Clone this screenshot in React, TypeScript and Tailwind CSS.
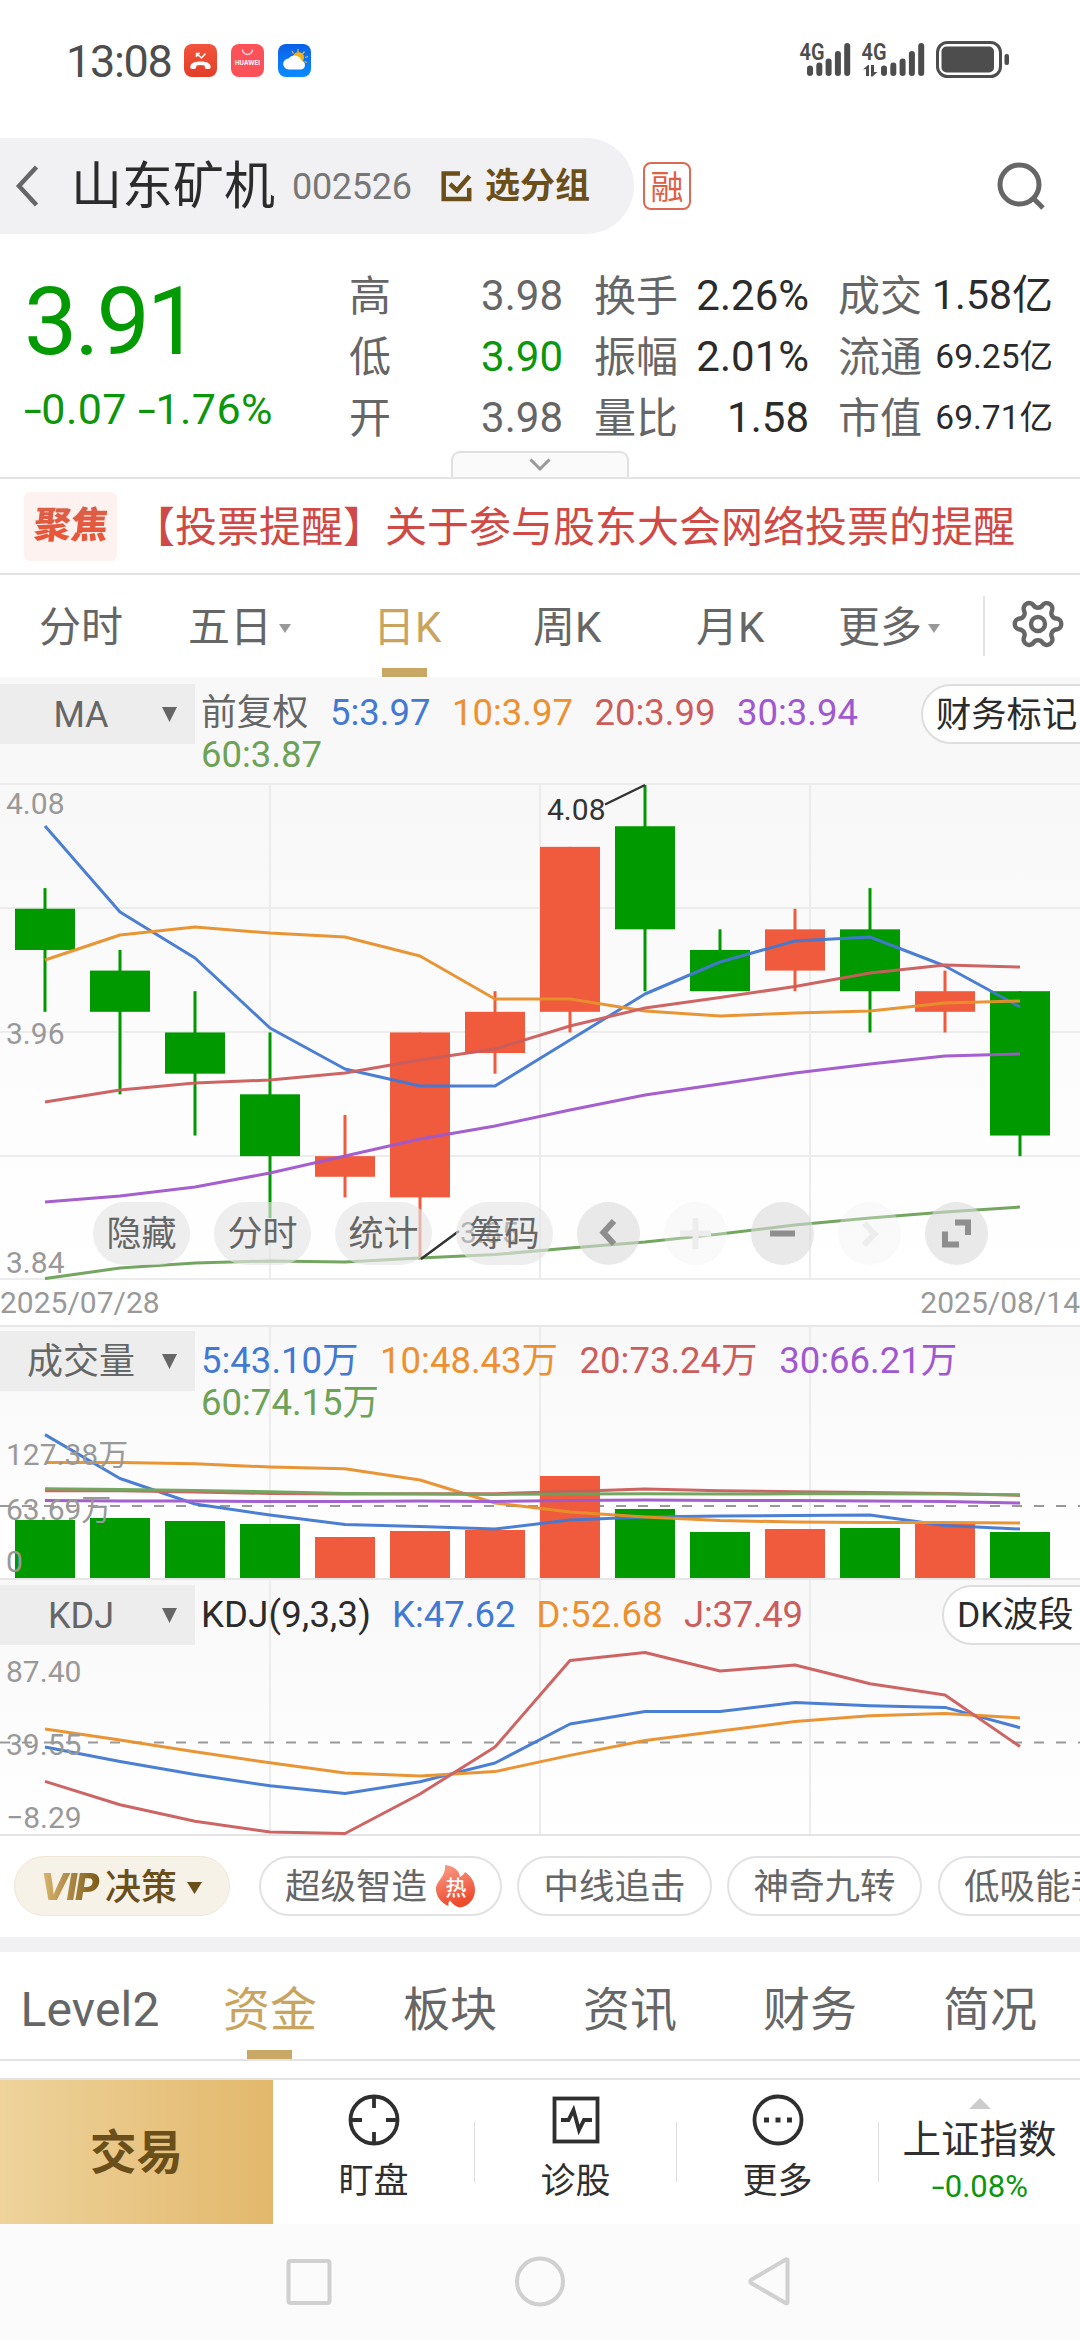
import type { ReactNode } from "react";
import { Settings } from "lucide-react";

type Candle = { open: number; close: number; high: number; low: number };

interface Series {
  color: string;
  ys: number[];
}

const UP = "#ef5b3c";
const DOWN = "#009900";
const BLUE = "#4279d2";
const ORANGE = "#e8902c";
const RED = "#cb5d5c";
const PURPLE = "#a058cc";
const GREEN = "#6da259";

const candles: Candle[] = [
  { open: 4.02, close: 4.0, high: 4.03, low: 3.97 },
  { open: 3.99, close: 3.97, high: 4.0, low: 3.93 },
  { open: 3.96, close: 3.94, high: 3.98, low: 3.91 },
  { open: 3.93, close: 3.9, high: 3.96, low: 3.87 },
  { open: 3.89, close: 3.9, high: 3.92, low: 3.88 },
  { open: 3.88, close: 3.96, high: 3.96, low: 3.85 },
  { open: 3.95, close: 3.97, high: 3.98, low: 3.94 },
  { open: 3.97, close: 4.05, high: 4.05, low: 3.96 },
  { open: 4.06, close: 4.01, high: 4.08, low: 3.98 },
  { open: 4.0, close: 3.98, high: 4.01, low: 3.98 },
  { open: 3.99, close: 4.01, high: 4.02, low: 3.98 },
  { open: 4.01, close: 3.98, high: 4.03, low: 3.96 },
  { open: 3.97, close: 3.98, high: 3.99, low: 3.96 },
  { open: 3.98, close: 3.91, high: 3.98, low: 3.9 },
];

const priceLines: Series[] = [
  { color: BLUE, ys: [827, 913, 959, 1029, 1070, 1087, 1087, 1041, 995, 963, 942, 938, 967, 1008] },
  { color: ORANGE, ys: [961, 936, 928, 934, 938, 957, 1000, 1000, 1012, 1017, 1014, 1012, 1004, 1002] },
  { color: RED, ys: [1103, 1091, 1084, 1081, 1074, 1061, 1050, 1027, 1009, 998.6, 987.5, 974, 966, 968] },
  { color: PURPLE, ys: [1203, 1197, 1188, 1174, 1157, 1140, 1127, 1111, 1096, 1085, 1074, 1065, 1057, 1055] },
  { color: GREEN, ys: [1279.6, 1269, 1264, 1262, 1263, 1259, 1255.5, 1249, 1243, 1235, 1226, 1219, 1213, 1208] },
];

const volumeTops = [1521, 1519, 1522, 1525, 1538, 1532, 1531, 1477, 1510, 1533, 1530, 1529, 1525, 1533];

const volumeLines: Series[] = [
  { color: BLUE, ys: [1435.6, 1479.5, 1505, 1516, 1525.5, 1527.5, 1530, 1521, 1518, 1517, 1516.5, 1516, 1526.5, 1530] },
  { color: ORANGE, ys: [1463.6, 1463.6, 1464.7, 1468, 1469.7, 1481, 1504, 1513, 1518, 1521.5, 1523, 1523.5, 1523.5, 1524] },
  { color: RED, ys: [1491.7, 1491.7, 1493, 1494.4, 1495, 1494.7, 1494.7, 1492.4, 1490, 1491.7, 1492.7, 1493.4, 1494.4, 1496.4] },
  { color: PURPLE, ys: [1501.5, 1502, 1502, 1502.5, 1502.5, 1502, 1502.5, 1501.5, 1501, 1501.5, 1501.5, 1502, 1502.5, 1504] },
  { color: GREEN, ys: [1489.7, 1490.4, 1491.4, 1492.7, 1494.4, 1495, 1495.4, 1495, 1494.8, 1495, 1494.8, 1494.8, 1495, 1495.7] },
];

const kdjLines: Series[] = [
  { color: BLUE, ys: [1748, 1762.5, 1775.6, 1786.8, 1794.6, 1782.7, 1764, 1725, 1712.4, 1712.4, 1703.6, 1706.7, 1708.4, 1728.7] },
  { color: ORANGE, ys: [1730, 1741, 1752.7, 1763.8, 1774, 1777, 1772.6, 1756.4, 1741.5, 1732, 1722.6, 1716.8, 1714.5, 1718.9] },
  { color: RED, ys: [1782.4, 1805.7, 1822.3, 1833, 1834.5, 1795, 1748, 1661.4, 1653.5, 1672, 1666, 1684.7, 1695.9, 1747.6] },
];

const stats = [
  [
    { label: "高", value: "3.98", tone: "text-[#666]" },
    { label: "低", value: "3.90", tone: "text-[#0b960b]" },
    { label: "开", value: "3.98", tone: "text-[#666]" },
  ],
  [
    { label: "换手", value: "2.26%", tone: "text-[#2b2b2b]" },
    { label: "振幅", value: "2.01%", tone: "text-[#2b2b2b]" },
    { label: "量比", value: "1.58", tone: "text-[#2b2b2b]" },
  ],
  [
    { label: "成交", value: "1.58亿", tone: "text-[#2b2b2b] text-[41px]" },
    { label: "流通", value: "69.25亿", tone: "text-[#2b2b2b] text-[33.5px]" },
    { label: "市值", value: "69.71亿", tone: "text-[#2b2b2b] text-[33.5px]" },
  ],
];
const statCols = ["w-[214px] ml-[349px]", "w-[215px] ml-[31px]", "w-[215px] ml-[29px]"];

const cx = (i: number) => 45 + i * 75;
const priceY = (p: number) => 786 + (4.08 - p) * 2062;

function Lines({ series }: { series: Series[] }) {
  return (
    <g fill="none" strokeWidth={3} strokeLinejoin="round" opacity={0.95}>
      {series.map((s, n) => (
        <polyline key={n} stroke={s.color} points={s.ys.map((y, i) => `${cx(i)},${y}`).join(" ")} />
      ))}
    </g>
  );
}

function GridCols({ top, bottom }: { top: number; bottom: number }) {
  return (
    <g stroke="#ececec" strokeWidth={2}>
      {[270, 540, 810].map((x) => (
        <line key={x} x1={x} x2={x} y1={top} y2={bottom} />
      ))}
    </g>
  );
}

function Down({ className = "" }: { className?: string }) {
  return (
    <svg viewBox="0 0 16 16" preserveAspectRatio="none" className={className}>
      <path d="M0 0h16L8 16z" fill="currentColor" />
    </svg>
  );
}

function Minus() {
  return <span className="inline-block scale-x-150 mx-[2.5px]">-</span>;
}

function Selector({ children }: { children: ReactNode }) {
  return (
    <div className="flex h-[60px] w-[195px] shrink-0 items-center bg-[#ededed] text-[#666]">
      <span className="w-[162px] pt-px text-center text-[36px]">{children}</span>
      <Down className="h-[15px] w-[15px]" />
    </div>
  );
}

function StatusBar() {
  return (
    <div className="flex h-[138px] items-start px-[66px] pt-[43px] text-[#4d4d4d]">
      <span className="w-[118px] text-[45px] leading-[38px] tracking-[-1.3px]">13:08</span>
      <svg viewBox="0 0 128 34" className="mt-px h-[34px] w-[128px]">
        <defs>
          <linearGradient id="phone" x1="0" y1="0" x2="0" y2="1">
            <stop offset="0" stopColor="#f2543c" />
            <stop offset="1" stopColor="#e23e28" />
          </linearGradient>
          <linearGradient id="sky" x1="0" y1="0" x2="0" y2="1">
            <stop offset="0" stopColor="#0a5fe8" />
            <stop offset="1" stopColor="#0a8cff" />
          </linearGradient>
        </defs>
        <rect width="33" height="33" rx="8" fill="url(#phone)" />
        <path d="M6.500 24c-1-4.500 3.500-6.500 10-6.500s11 2 10 6.500c-.3 1.500-5 1.200-5.500 0l-.5-2.500c-2.500-.8-5.500-.8-8 0L12 24c-.5 1.200-5.200 1.500-5.500 0z" fill="#fff" />
        <path d="M12.500 13V9.500H16M13 10l4.500 4 4-4.500" fill="none" stroke="#fff" strokeWidth="1.500" />
        <rect x="47" width="33" height="33" rx="8" fill="#fb5259" />
        <path d="M58.500 5.500a5 5 0 0 0 10 0" fill="none" stroke="#ffd9da" strokeWidth="1.300" />
        <text x="63.500" y="21" textAnchor="middle" fill="#fff" fontSize="6" fontWeight="700" textLength="25" fontFamily="Inter, sans-serif">HUAWEI</text>
        <rect x="94" width="33" height="33" rx="8" fill="url(#sky)" />
        <g stroke="#e5b93f" strokeWidth="1.300">
          <path d="M114 5v3M108 7l1.500 2.500M120.500 7.500l-2 2.500M124 12.500l-3 1M123 18.500l-2.500-1" />
        </g>
        <circle cx="114.500" cy="13.500" r="5.500" fill="#f5b21a" />
        <path d="M105 25.500a5.500 5.500 0 0 1-.5-11 7.500 7.500 0 0 1 13 2 4.600 4.600 0 0 1-.5 9z" fill="#fdfdfd" />
      </svg>
      <svg viewBox="798 38 214 42" className="-mt-[5px] ml-auto mr-[2px] h-[42px] w-[214px]" fill="#4d4d4d">
        <g fontFamily="Roboto, sans-serif" fontSize="23" fontWeight="600">
          <text x="799.500" y="59.500" textLength="25" lengthAdjust="spacingAndGlyphs">4G</text>
          <text x="861.500" y="59.500" textLength="25" lengthAdjust="spacingAndGlyphs">4G</text>
        </g>
        {[65.5, 62.5, 58.5, 51, 43].map((y, i) => (
          <g key={i}>
            <rect x={807 + i * 9.3} y={y} width="6" height={76 - y} rx="3" />
            <rect x={881 + i * 9.3} y={y} width="6" height={76 - y} rx="3" />
          </g>
        ))}
        <path d="M863 69.500l5-4.500h1v11h-3v-7zM871 65h3v7h3.500l-5 4.500H871z" />
        <rect x="937.500" y="42.500" width="63" height="34" rx="10" fill="none" stroke="#4d4d4d" strokeWidth="3" />
        <rect x="941.500" y="46.500" width="52.500" height="26" rx="5" />
        <rect x="1004.500" y="54" width="4.500" height="11" rx="2" />
      </svg>
    </div>
  );
}

function Header() {
  return (
    <div className="flex h-[96px] items-center">
      <div className="flex h-[96px] w-[634px] items-center rounded-r-[48px] bg-[#f1f1f4]">
        <svg viewBox="0 0 24 42" className="ml-[15px] h-[42px] w-[24px]" fill="none" stroke="#666" strokeWidth="4.500">
          <path d="M21.500 2L4 21l17.500 19" />
        </svg>
        <span className="ml-[32px] w-[205px] pt-[3px] whitespace-nowrap text-[51px] text-[#2b2b2b]">山东矿机</span>
        <span className="ml-[16px] w-[120px] pt-px text-[36px] tracking-[-0.3px] text-[#777]">002526</span>
        <svg viewBox="0 0 32 32" className="ml-[29px] h-[32px] w-[32px]" fill="none" stroke="#6b4f1a" strokeWidth="4.500">
          <path d="M19 3.500H2.700v25.500h25.500V18" />
          <path d="M9 14l7 6.500L28.500 6" />
        </svg>
        <span className="ml-[12px] pt-[2px] text-[35px] font-bold text-[#6b4f1a]">选分组</span>
      </div>
      <div className="ml-[9px] flex h-[48px] w-[48px] items-center justify-center rounded-[8px] border-[2.5px] border-[#dc6a52] pt-[2px] text-[33px] leading-none text-[#df5f45]">
        融
      </div>
      <svg viewBox="0 0 50 50" className="ml-[305px] h-[50px] w-[50px]" fill="none" stroke="#666" strokeWidth="5">
        <circle cx="23.500" cy="23.500" r="19.500" />
        <path d="M37 37l10 10" />
      </svg>
    </div>
  );
}

function Quote() {
  return (
    <div className="relative h-[245px] border-b-2 border-[#e3e3e3]">
      <div className="absolute left-[24px] top-[36px] text-[#049a04]">
        <div className="h-[104px] text-[95px] leading-[104px] tracking-[-3px]">3.91</div>
        <div className="mt-[9px] text-[43px] leading-[52px] tracking-[0.45px] whitespace-nowrap text-[#0b960b]">
          <Minus />0.07 <Minus />1.76%
        </div>
      </div>
      <div className="flex pt-[31px]">
        {stats.map((col, c) => (
          <div key={c} className={statCols[c]}>
            {col.map((s) => (
              <div key={s.label} className="flex h-[61px] items-center justify-between text-[42px] leading-[61px] whitespace-nowrap">
                <span className="pt-px text-[#666]">{s.label}</span>
                <span className={s.tone}>{s.value}</span>
              </div>
            ))}
          </div>
        ))}
      </div>
      <div className="absolute bottom-0 left-[451px] flex h-[26px] w-[178px] items-center justify-center rounded-t-[9px] border-2 border-b-0 border-[#e0e0e0] bg-[#fafafa]">
        <svg viewBox="0 0 22 14" className="h-[14px] w-[22px]" fill="none" stroke="#999" strokeWidth="3">
          <path d="M1.500 1.500L11 11l9.500-9.500" />
        </svg>
      </div>
    </div>
  );
}

function News() {
  return (
    <div className="flex h-[96px] items-center border-b-2 border-[#e3e3e3]">
      <div className="ml-[24px] flex h-[69px] w-[93px] items-center justify-center rounded-[6px] bg-[#fdf2f0]">
        <span className="-skew-x-6 bg-gradient-to-b from-[#d8604a] to-[#f0512f] bg-clip-text text-[37px] font-black leading-[44px] text-transparent">聚焦</span>
      </div>
      <span className="ml-[16px] pt-[3px] whitespace-nowrap text-[42px] text-[#cf4a46]">【投票提醒】关于参与股东大会网络投票的提醒</span>
    </div>
  );
}

function PeriodTabs() {
  return (
    <div className="relative flex h-[101px] items-center pt-[2px] text-[42px] whitespace-nowrap text-[#666]">
      <span className="ml-[39px] w-[149px]">分时</span>
      <span className="flex w-[185px] items-center">五日<Down className="ml-[7px] mt-[2px] h-[9px] w-[12px] text-[#999]" /></span>
      <span className="w-[160px] text-[#c9a45f]">日K</span>
      <span className="w-[163px]">周K</span>
      <span className="w-[142px]">月K</span>
      <span className="flex w-[145px] items-center">更多<Down className="ml-[6px] mt-[2px] h-[9px] w-[12px] text-[#999]" /></span>
      <span className="-mt-[3px] h-[60px] w-[2px] bg-[#e3e3e3]" />
      <Settings className="ml-[25px] -mt-[8px] h-[56px] w-[56px] rotate-90" strokeWidth={1.9} />
      <span className="absolute bottom-0 left-[382px] h-[9px] w-[45px] bg-[#c9a764]" />
    </div>
  );
}

function PriceHeader() {
  return (
    <div className="flex h-[107px] items-start overflow-hidden bg-[#f8f8f8] pt-[7px]">
      <Selector>MA</Selector>
      <div className="ml-[6px] flex w-[720px] shrink-0 flex-wrap gap-x-[21.5px] text-[36.5px] leading-[42px] pt-[8px] whitespace-nowrap">
        <span className="text-[35.8px] text-[#666]">前复权</span>
        <span className="text-[#4279d2]">5:3.97</span>
        <span className="text-[#ec9030]">10:3.97</span>
        <span className="text-[#cb5d5c]">20:3.99</span>
        <span className="text-[#a058d0]">30:3.94</span>
        <span className="w-full text-[#6da259]">60:3.87</span>
      </div>
      <div className="flex h-[60px] w-[180px] shrink-0 items-center rounded-l-[30px] border-2 border-[#dedede] bg-white pl-[13px] pt-[2px] text-[35.3px] whitespace-nowrap text-[#2b2b2b]">
        财务标记
      </div>
    </div>
  );
}

const toolbarIcons = [
  { off: false, art: <path d="M37 19L26.500 30.500 37 42" /> },
  { off: true, art: <path d="M31.500 16v31M16 31.500h31" /> },
  { off: false, art: <path d="M19 31.500h25" /> },
  { off: true, art: <path d="M26 21l10.500 11L26 43" /> },
  { off: false, art: <path d="M30 20.500h13V33M20 29.500v13h14" /> },
];

function PriceChart() {
  return (
    <div className="relative h-[497px] bg-gradient-to-b from-[#f8f8f8] to-white">
      <svg viewBox="0 784 1080 497" className="block h-[497px] w-[1080px]">
        <g stroke="#ececec" strokeWidth={2}>
          {[785, 909, 1033, 1157, 1280].map((y) => (
            <line key={y} x1={0} x2={1080} y1={y} y2={y} />
          ))}
        </g>
        <GridCols top={785} bottom={1280} />
        {candles.map((c, i) => {
          const color = c.close >= c.open ? UP : DOWN;
          const top = priceY(Math.max(c.open, c.close));
          return (
            <g key={i} fill={color}>
              <rect x={cx(i) - 1.5} y={priceY(c.high)} width={3} height={priceY(c.low) - priceY(c.high)} />
              <rect x={cx(i) - 30} y={top} width={60} height={priceY(Math.min(c.open, c.close)) - top} />
            </g>
          );
        })}
        <Lines series={priceLines} />
        <g fontSize={30} fill="#999">
          <text x={6} y={815}>4.08</text>
          <text x={6} y={1045}>3.96</text>
          <text x={6} y={1274}>3.84</text>
          <text x={547} y={821} fill="#333">4.08</text>
          <text x={460} y={1244} fill="#555">3.85</text>
        </g>
        <path d="M605 805.500L645 786M421 1260l38-28" stroke="#333" strokeWidth={2.5} />
      </svg>
      <div className="absolute left-[93px] top-[419px] flex gap-[24px] text-[35px] leading-[65px] text-[#666]">
        {["隐藏", "分时", "统计", "筹码"].map((t) => (
          <span key={t} className="h-[63px] w-[97px] rounded-full bg-[#e5e5e5]/65 text-center">{t}</span>
        ))}
        {toolbarIcons.map((b, i) => (
          <span key={i} className={b.off ? "h-[63px] w-[63px] rounded-full bg-[#f0f0f0]/35" : "h-[63px] w-[63px] rounded-full bg-[#dadada]/60"}>
            <svg viewBox="0 0 63 63" className="h-[63px] w-[63px]" fill="none" stroke={b.off ? "#ededed" : "#8e8e8e"} strokeWidth={6}>
              {b.art}
            </svg>
          </span>
        ))}
      </div>
    </div>
  );
}

function VolumeChart() {
  return (
    <div className="relative h-[255px] bg-gradient-to-b from-[#f8f8f8] to-white">
      <svg viewBox="0 1326 1080 255" className="block h-[255px] w-[1080px]">
        <path d="M0 1327h1080M0 1580h1080" stroke="#e6e6e6" strokeWidth={2} />
        <GridCols top={1327} bottom={1580} />
        <line x1={0} x2={1080} y1={1507} y2={1507} stroke="#999" strokeWidth={2} strokeDasharray="10 12" />
        {volumeTops.map((y, i) => (
          <rect key={i} x={cx(i) - 30} y={y} width={60} height={1579 - y} fill={candles[i].close >= candles[i].open ? UP : DOWN} />
        ))}
        <Lines series={volumeLines} />
        <g fontSize={30} fill="#999">
          <text x={6} y={1466}>127.38万</text>
          <text x={6} y={1521}>63.69万</text>
          <text x={6} y={1573}>0</text>
        </g>
      </svg>
      <div className="absolute inset-x-0 top-[6px] flex items-start">
        <Selector>成交量</Selector>
        <div className="ml-[6px] flex w-[800px] flex-wrap gap-x-[21.5px] pt-[9px] text-[36.5px] leading-[42px] whitespace-nowrap">
          <span className="text-[#4279d2]">5:43.10万</span>
          <span className="text-[#ec9030]">10:48.43万</span>
          <span className="text-[#cb5d5c]">20:73.24万</span>
          <span className="text-[#a058d0]">30:66.21万</span>
          <span className="w-full text-[#6da259]">60:74.15万</span>
        </div>
      </div>
    </div>
  );
}

function KdjChart() {
  return (
    <div className="relative h-[256px] overflow-hidden bg-gradient-to-b from-[#f8f8f8] to-white">
      <svg viewBox="0 1581 1080 256" className="block h-[256px] w-[1080px]">
        <GridCols top={1581} bottom={1836} />
        <path d="M0 1836h1080" stroke="#e3e3e3" strokeWidth={2} />
        <line x1={0} x2={1080} y1={1743.5} y2={1743.5} stroke="#999" strokeWidth={2} strokeDasharray="10 12" />
        <Lines series={kdjLines} />
        <g fontSize={30} fill="#999">
          <text x={6} y={1683}>87.40</text>
          <text x={6} y={1756}>39.55</text>
          <text x={6} y={1829}>−8.29</text>
        </g>
      </svg>
      <div className="absolute inset-x-0 top-[5px] flex items-start">
        <Selector>KDJ</Selector>
        <div className="ml-[6px] flex w-[741px] shrink-0 gap-[21px] pt-[9px] text-[36.5px] leading-[42px] whitespace-nowrap">
          <span className="tracking-[0.2px] text-[#2b2b2b]">KDJ(9,3,3)</span>
          <span className="text-[#4279d2]">K:47.62</span>
          <span className="tracking-[0.3px] text-[#ec9030]">D:52.68</span>
          <span className="tracking-[-0.3px] text-[#cb5d5c]">J:37.49</span>
        </div>
        <div className="flex h-[60px] w-[180px] shrink-0 items-center rounded-l-[30px] border-2 border-[#dedede] bg-white pl-[13px] pt-[2px] text-[35.5px] whitespace-nowrap text-[#2b2b2b]">
          DK波段
        </div>
      </div>
    </div>
  );
}

function Flame() {
  return (
    <svg viewBox="0 0 40 43" className="-mt-[3px] ml-[9px] h-[43px] w-[40px]">
      <defs>
        <linearGradient id="flame" x1="0" y1="0" x2="0.3" y2="1">
          <stop offset="0" stopColor="#f9a08d" />
          <stop offset="1" stopColor="#ee4a2c" />
        </linearGradient>
      </defs>
      <path d="M9 0c9 1 14 5 15 12 2-1 4-3 5-5 6 4 10 10 10 18 0 9-6 16-15 17.500-4-.5-7-3-10-7-1.500 1-2 3-1.500 5.500C5 38 0 31 0 24 0 16 10 12 9 0z" fill="url(#flame)" />
      <text x="20" y="30" textAnchor="middle" fontSize="21" fontWeight="500" fill="#fff">热</text>
    </svg>
  );
}

function VipRow() {
  const pill = "flex h-[60px] shrink-0 items-center rounded-full border-2 border-[#e2e2e2] pt-[3px] text-[35.5px] text-[#666] whitespace-nowrap";
  return (
    <div className="flex h-[101px] items-start overflow-hidden pt-[20px]">
      <div className="ml-[14px] flex h-[60px] w-[216px] shrink-0 items-center rounded-full border border-[#efe8d6] bg-[#f6f2e7] text-[#6b4f1a]">
        <span className="ml-[25px] w-[65px] pt-px">
          <span className="block w-[60px] bg-gradient-to-r from-[#dfb972] to-[#7a5a16] bg-clip-text pr-[2px] font-['Inter'] text-[37px] font-extrabold italic leading-[44px] tracking-[-2px] text-transparent">VIP</span>
        </span>
        <span className="pt-[3px] text-[36px] font-medium">决策</span>
        <Down className="ml-[10px] mt-[4px] h-[12px] w-[15px]" />
      </div>
      <div className={`${pill} ml-[29px] w-[243px] pl-[24px]`}>超级智造<Flame /></div>
      <div className={`${pill} ml-[15px] w-[195px] justify-center`}>中线追击</div>
      <div className={`${pill} ml-[15px] w-[195px] justify-center`}>神奇九转</div>
      <div className={`${pill} ml-[16px] w-[196px] pl-[24px]`}>低吸能手</div>
    </div>
  );
}

function InfoTabs() {
  return (
    <div className="relative grid h-[109px] grid-cols-6 border-b-2 border-[#e3e3e3] text-center text-[47px] leading-[115px] text-[#666]">
      <span className="text-[48px] tracking-[0.2px]">Level2</span>
      <span className="text-[#c9a45f]">资金</span>
      <span>板块</span>
      <span>资讯</span>
      <span>财务</span>
      <span>简况</span>
      <span className="absolute bottom-0 left-[247px] h-[9px] w-[45px] bg-[#c9a764]" />
    </div>
  );
}

const actions = [
  {
    label: "盯盘",
    art: (
      <>
        <circle cx="26" cy="26" r="23.500" />
        <path d="M26 2v12M26 38v12M2 26h12M38 26h12" />
      </>
    ),
  },
  {
    label: "诊股",
    art: (
      <>
        <rect x="4.500" y="4.500" width="43" height="43" />
        <path d="M11 26h7.500l5-10 5.500 20 5-10h8" />
      </>
    ),
  },
  {
    label: "更多",
    art: (
      <>
        <circle cx="26" cy="26" r="23.500" />
        <path d="M12 26h5M23.500 26h5M35 26h5" strokeWidth={5} />
      </>
    ),
  },
];

function BottomBar() {
  return (
    <div className="flex h-[146px] border-t-2 border-[#e3e3e3] text-[#2f2f2f]">
      <div className="w-[273px] bg-gradient-to-r from-[#eed39b] to-[#e2b86c] text-center text-[46.5px] font-bold leading-[146px] text-[#6b4f1a]">交易</div>
      {actions.map((a) => (
        <div key={a.label} className="flex w-[202px] items-center">
          <div className="flex h-full flex-1 flex-col items-center pt-[14px]">
            <svg viewBox="0 0 52 52" className="h-[52px] w-[52px]" fill="none" stroke="#2f2f2f" strokeWidth={3.8}>
              {a.art}
            </svg>
            <span className="mt-[11px] text-[35px] leading-[50px]">{a.label}</span>
          </div>
          <span className="h-[60px] w-px bg-[#dedede]" />
        </div>
      ))}
      <div className="flex flex-1 flex-col items-center pt-[18px]">
        <Down className="h-[11px] w-[22px] rotate-180 text-[#ccc]" />
        <span className="mt-[5px] text-[38.5px] leading-[52px] whitespace-nowrap">上证指数</span>
        <span className="mt-px text-[31px] leading-[40px] text-[#0b960b]"><Minus />0.08%</span>
      </div>
    </div>
  );
}

function NavBar() {
  return (
    <div className="h-[116px] bg-[#fbfbfb]">
      <svg viewBox="0 0 1080 116" className="h-[116px] w-[1080px]" fill="none" stroke="#d0d0d0" strokeWidth={4}>
        <rect x="288.500" y="37" width="41" height="42" rx="2" />
        <circle cx="540" cy="57.500" r="23" />
        <path d="M787.500 36.500v42a1 1 0 0 1-1.500.8L751 59a2 2 0 0 1 0-3l35-20.500a1 1 0 0 1 1.500 1z" />
      </svg>
    </div>
  );
}

export default function App() {
  return (
    <div className="h-[2340px] w-[1080px] overflow-hidden bg-white font-[Roboto,'Noto_Sans_CJK_SC',sans-serif]">
      <StatusBar />
      <Header />
      <Quote />
      <News />
      <div className="h-px" />
      <PeriodTabs />
      <PriceHeader />
      <div className="-mt-px" />
      <PriceChart />
      <div className="flex h-[45px] items-center justify-between text-[30px] leading-none text-[#999]">
        <span>2025/07/28</span>
        <span>2025/08/14</span>
      </div>
      <VolumeChart />
      <KdjChart />
      <VipRow />
      <div className="h-[15px] bg-[#f1f1f4]" />
      <InfoTabs />
      <div className="h-[17px]" />
      <BottomBar />
      <NavBar />
    </div>
  );
}
